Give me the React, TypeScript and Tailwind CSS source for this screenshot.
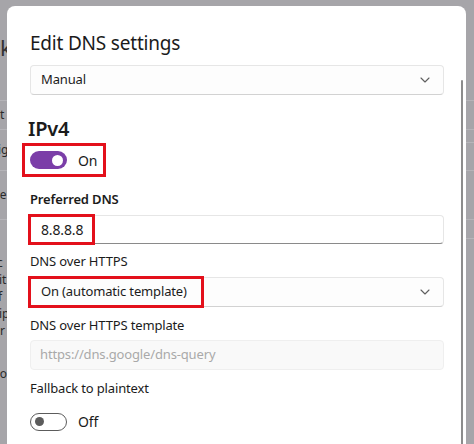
import React from "react";

function Chevron() {
  return (
    <svg width="10" height="6" viewBox="0 0 10 6" fill="none" className="shrink-0">
      <path d="M1 1l4 4 4-4" stroke="#5f5f5f" strokeWidth="1.1" strokeLinecap="round" strokeLinejoin="round" />
    </svg>
  );
}

function RedBox({ className }: { className: string }) {
  return <div className={"pointer-events-none absolute border-[3px] border-[#e3101b] " + className} />;
}

export default function App() {
  const font = { fontFamily: '"Noto Sans", "Open Sans", sans-serif' };
  return (
    <div className="relative w-[474px] h-[444px] overflow-hidden bg-[#a6a5a9] text-[#1b1b1b]" style={font}>
      {/* background page (behind dialog) */}
      <div className="flex flex-col text-[#2a2a2a] text-[12px] leading-none">
        <div className="h-[32px]" />
        <div className="h-[30px] flex items-center text-[22px] text-[#333]">k</div>
        <div className="h-[38px]" />
        <div className="h-[1px] bg-[#b5b4b8]" />
        <div className="h-[28px] flex items-center">t</div>
        <div className="h-[1px] bg-[#b5b4b8]" />
        <div className="h-[40px] flex items-center -ml-[2px]">ig</div>
        <div className="h-[1px] bg-[#b5b4b8]" />
        <div className="h-[48px] flex items-center -ml-[6px]">se</div>
        <div className="h-[1px] bg-[#b5b4b8]" />
        <div className="h-[34px]" />
        <div className="h-[17px] flex items-center -ml-[6px]">ic</div>
        <div className="h-[17px] flex items-center -ml-[1px]">it</div>
        <div className="h-[17px] flex items-center -ml-[2px]">f</div>
        <div className="h-[17px] flex items-center -ml-[1px]">ip</div>
        <div className="h-[17px] flex items-center">r</div>
        <div className="h-[26px]" />
        <div className="h-[17px] flex items-center -ml-[6px]">co</div>
      </div>

      {/* dialog */}
      <div className="absolute left-[7px] top-[6px] w-[459px] h-[450px] bg-white rounded-t-[8px] pl-[23px] pr-[22px] flex flex-col text-[13px] tracking-[-0.15px]">
        <div className="mt-[23px] h-[28px] flex items-center text-[19px] tracking-[-0.2px] leading-none">Edit DNS settings</div>

        <div className="mt-[8px] h-[30px] rounded-[4px] border border-[#e6e6e6] border-b-[#d2d2d2] bg-[#fdfdfd] flex items-center justify-between pl-[10px] pr-[13px]">
          <span>Manual</span>
          <Chevron />
        </div>

        <div className="mt-[20px] h-[28px] flex items-center text-[20px] font-semibold leading-none -ml-[2px] tracking-[-0.2px]">IPv4</div>

        <div className="relative h-[34px] flex items-center gap-[11px]">
          <RedBox className="-left-[8px] top-0 w-[84px] h-[34px]" />
          <div className="w-[37px] h-[18px] rounded-full bg-[#7b3ea8] flex items-center justify-end pr-[4px]">
            <div className="w-[11px] h-[11px] rounded-full bg-white" />
          </div>
          <span className="text-[14px]">On</span>
        </div>

        <div className="mt-[13px] h-[20px] flex items-center font-semibold">Preferred DNS</div>

        <div className="relative mt-[5px] h-[29px] rounded-[4px] border border-[#e6e6e6] border-b-[#8a8a8a] flex items-center pl-[10px] text-[14px]">
          <RedBox className="-left-[3px] -top-[2px] w-[67px] h-[31px]" />
          <span>8.8.8.8</span>
        </div>

        <div className="mt-[8px] h-[20px] flex items-center">DNS over HTTPS</div>

        <div className="relative mt-[5px] h-[30px] rounded-[4px] border border-[#e6e6e6] border-b-[#d2d2d2] bg-[#fdfdfd] flex items-center justify-between pl-[10px] pr-[13px]">
          <RedBox className="-left-[3px] -top-[2px] w-[176px] h-[32px]" />
          <span>On (automatic template)</span>
          <Chevron />
        </div>

        <div className="mt-[9px] h-[20px] flex items-center">DNS over HTTPS template</div>

        <div className="mt-[4px] h-[30px] rounded-[4px] border border-[#efefef] bg-[#f9f9f9] flex items-center pl-[9px] text-[#a9a9a9]">
          https://dns.google/dns-query
        </div>

        <div className="mt-[9px] h-[20px] flex items-center">Fallback to plaintext</div>

        <div className="mt-[13px] h-[19px] flex items-center gap-[11px]">
          <div className="w-[37px] h-[18px] rounded-full border border-[#5c5c5c] flex items-center pl-[4px]">
            <div className="w-[9px] h-[9px] rounded-full bg-[#5c5c5c]" />
          </div>
          <span className="text-[14px]">Off</span>
        </div>

        {/* scrollbar */}
        <div className="absolute right-[3px] top-[74px] w-[2px] h-[380px] bg-[#8c8c8c] rounded-full" />
      </div>

      {/* right strip lines */}
      <div className="absolute right-0 top-[142px] w-[8px] h-[1px] bg-[#b6b5b9]" />
      <div className="absolute right-0 top-[238px] w-[8px] h-[1px] bg-[#b6b5b9]" />
    </div>
  );
}
